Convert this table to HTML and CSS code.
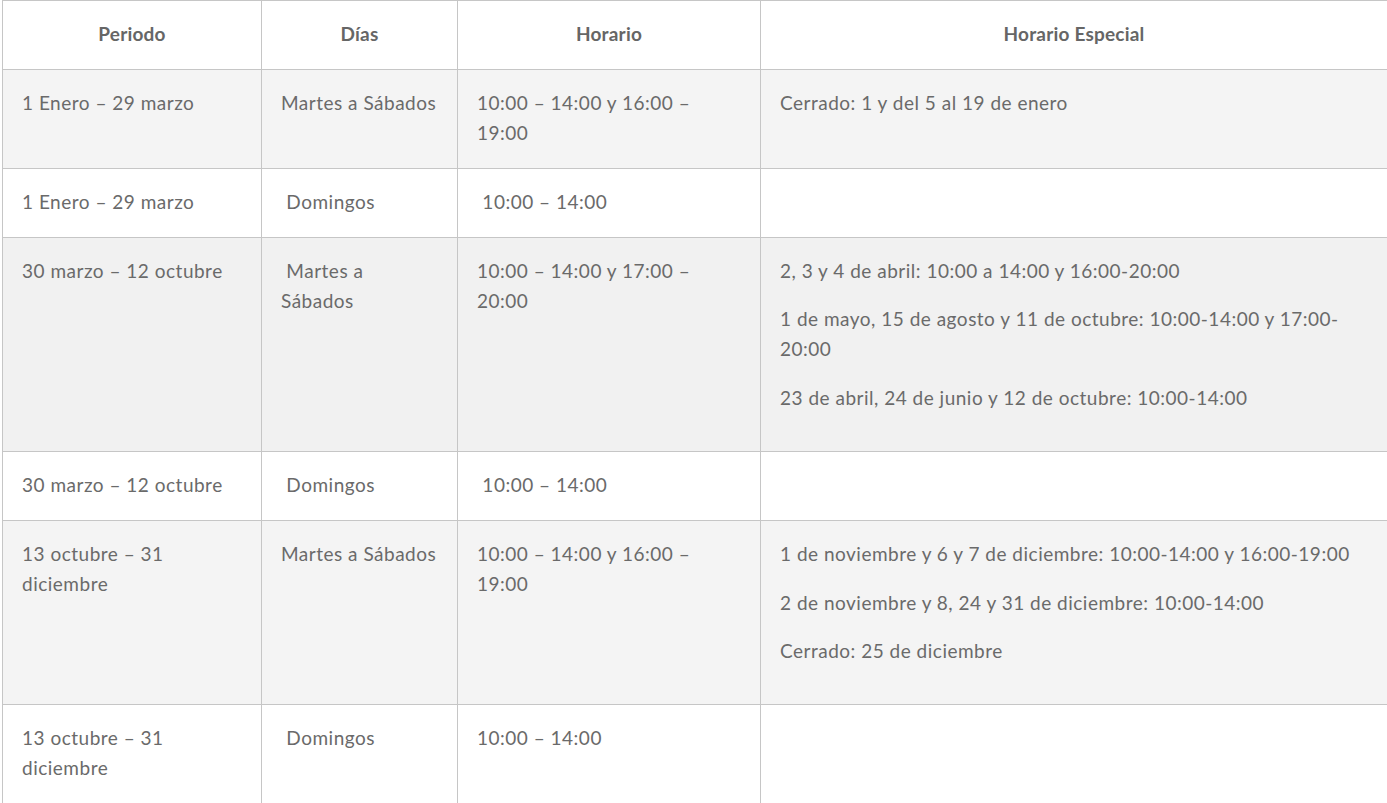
FILE: index.html
```html
<!DOCTYPE html>
<html lang="es">
<head>
<meta charset="utf-8">
<title>Horarios</title>
<link rel="stylesheet" href="styles.css">
</head>
<body>
<table class="schedule">
  <colgroup>
    <col class="c-period">
    <col class="c-days">
    <col class="c-hours">
    <col class="c-special">
  </colgroup>
  <thead>
    <tr>
      <th>Periodo</th>
      <th>Días</th>
      <th>Horario</th>
      <th>Horario Especial</th>
    </tr>
  </thead>
  <tbody>
    <tr class="shade">
      <td>1 Enero – 29 marzo</td>
      <td>Martes a Sábados</td>
      <td>10:00 – 14:00 y 16:00 – 19:00</td>
      <td>Cerrado: 1 y del 5 al 19 de enero</td>
    </tr>
    <tr>
      <td>1 Enero – 29 marzo</td>
      <td>&nbsp;Domingos</td>
      <td>&nbsp;10:00 – 14:00</td>
      <td></td>
    </tr>
    <tr class="shade dark">
      <td>30 marzo – 12 octubre</td>
      <td>&nbsp;Martes a Sábados</td>
      <td>10:00 – 14:00 y 17:00 – 20:00</td>
      <td>
        <p>2, 3 y 4 de abril: 10:00 a 14:00 y 16:00-20:00</p>
        <p>1 de mayo, 15 de agosto y 11 de octubre: 10:00-14:00 y 17:00-20:00</p>
        <p>23 de abril, 24 de junio y 12 de octubre: 10:00-14:00</p>
      </td>
    </tr>
    <tr>
      <td>30 marzo – 12 octubre</td>
      <td>&nbsp;Domingos</td>
      <td>&nbsp;10:00 – 14:00</td>
      <td></td>
    </tr>
    <tr class="shade">
      <td>13 octubre – 31 diciembre</td>
      <td>Martes a Sábados</td>
      <td>10:00 – 14:00 y 16:00 – 19:00</td>
      <td>
        <p>1 de noviembre y 6 y 7 de diciembre: 10:00-14:00 y 16:00-19:00</p>
        <p>2 de noviembre y 8, 24 y 31 de diciembre: 10:00-14:00</p>
        <p>Cerrado: 25 de diciembre</p>
      </td>
    </tr>
    <tr>
      <td>13 octubre – 31 diciembre</td>
      <td>&nbsp;Domingos</td>
      <td>10:00 – 14:00</td>
      <td></td>
    </tr>
  </tbody>
</table>
</body>
</html>
```

FILE: styles.css
```css
html, body {
  margin: 0;
  padding: 0;
  background: #ffffff;
}

body {
  padding-left: 2px;
  font-family: "Lato", "Liberation Sans", sans-serif;
  color: #6a6a6a;
}

.schedule {
  border-collapse: collapse;
  table-layout: fixed;
  width: 1385px;
  font-size: 19px;
  line-height: 30px;
  letter-spacing: 0.5px;
}

.c-period { width: 259px; }
.c-days { width: 196px; }
.c-hours { width: 303px; }
.c-special { width: 627px; }

.schedule th,
.schedule td {
  border: 1px solid #c6c6c6;
  padding: 18px 19px 20px 19px;
  vertical-align: top;
  text-align: left;
}

.schedule th {
  text-align: center;
  font-weight: 700;
  color: #666666;
  letter-spacing: 0.2px;
}

.schedule td p {
  margin: 0 0 18.4px 0;
}

.shade td {
  background: #f4f4f4;
}

.shade.dark td {
  background: #f1f1f1;
}
```
